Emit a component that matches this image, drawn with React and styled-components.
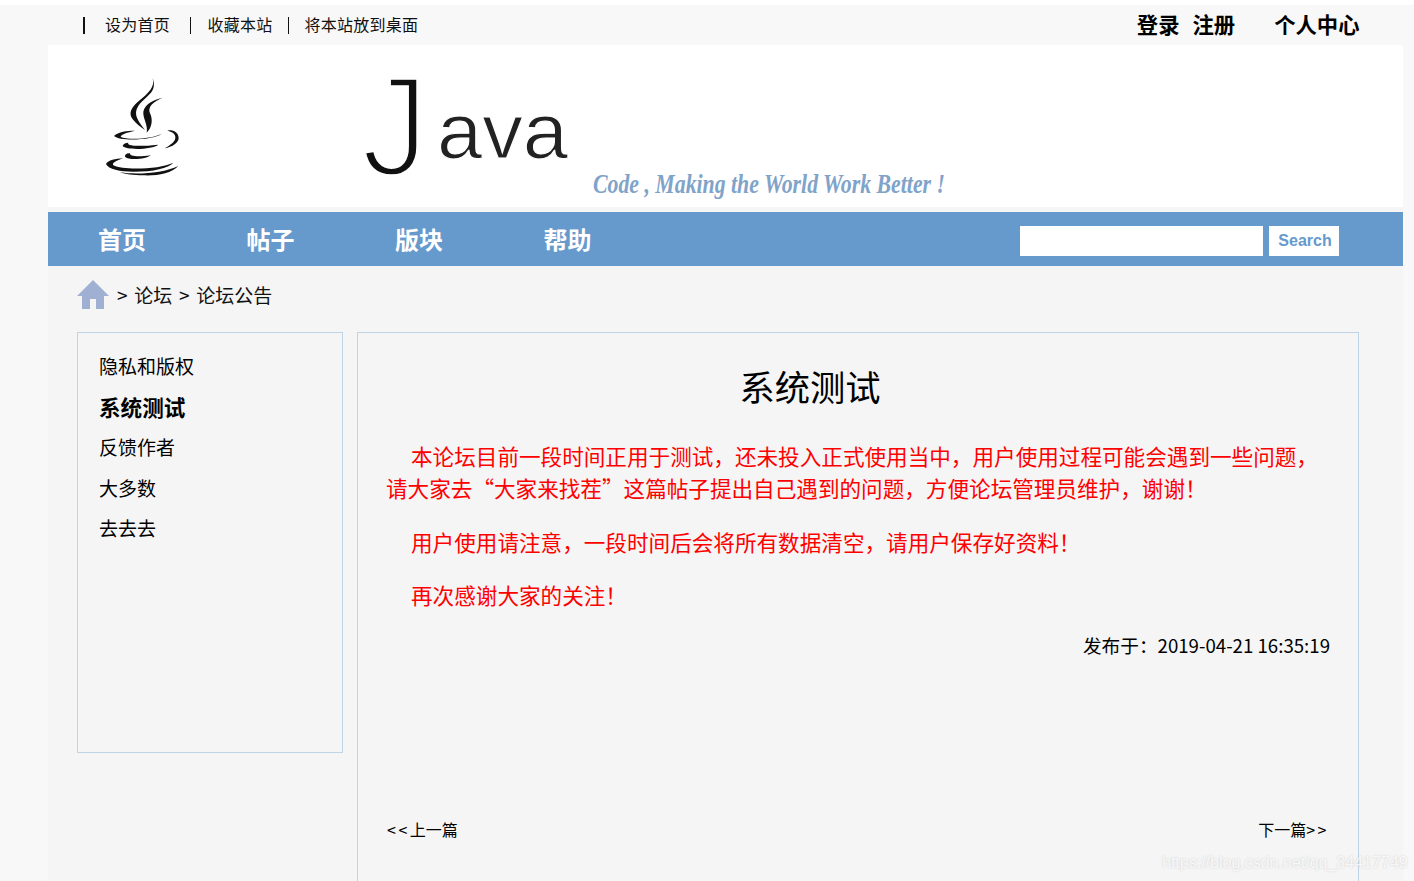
import React from "react";
import styled, { createGlobalStyle } from "styled-components";

const Global = createGlobalStyle`
  html, body { margin: 0; padding: 0; height: 881px; overflow: hidden; background: #fff; }
  body { font-family: "Noto Sans CJK SC", "Liberation Sans", sans-serif; color: #000; }
  * { box-sizing: border-box; }
`;

const Page = styled.div`
  position: relative;
  height: 881px;
  margin-top: 5px;
  padding-left: 48px;
  padding-right: 11px;
  background: #f8f8f8;
  overflow: hidden;
`;
const Wrapper = styled.div`
  width: 1355px;
  min-height: 876px;
  background: #f5f5f5;
`;
const TopBar = styled.div`
  height: 40px;
  display: flex;
  align-items: center;
  justify-content: space-between;
  background: #f8f8f8;
  margin-left: -48px;
  padding: 0 43.5px 0 83px;
  width: 1403px;
`;
const TopLinks = styled.div`
  display: flex;
  align-items: center;
  font-size: 16px;
  line-height: 38px;
  height: 40px;
  padding-bottom: 2px;
`;
const Sep = styled.span`
  display: inline-block;
  width: 1.5px;
  height: 17px;
  margin-top: 2px;
  background: #111;
  margin-left: ${(p) => p.$ml}px;
  margin-right: ${(p) => p.$mr}px;
`;
const TopLink = styled.a`
  color: #111;
  text-decoration: none;
  letter-spacing: 0.25px;
`;
const UserLinks = styled.div`
  display: flex;
  font-size: 21.33px;
  font-weight: 700;
  line-height: 38px;
  height: 40px;
  padding-bottom: 2px;
`;
const UserLink = styled.a`
  color: #000;
  margin-left: ${(p) => p.$ml || 0}px;
`;
const Banner = styled.div`
  height: 162px;
  background: #fff;
`;
const Logo = styled.svg`
  display: block;
`;
const Nav = styled.nav`
  height: 54px;
  margin-top: 5px;
  background: #6699cc;
  display: flex;
  align-items: center;
  padding: 0 64px 0 50px;
`;
const NavItem = styled.a`
  width: 148.5px;
  color: #fff;
  font-size: 24px;
  font-weight: 700;
  line-height: 54px;
`;
const SearchForm = styled.form`
  margin: 4px 0 0 auto;
  display: flex;
  gap: 6px;
`;
const SearchInput = styled.input`
  width: 243px;
  height: 30px;
  border: 0;
  padding: 0;
  background: #fff;
`;
const SearchButton = styled.button`
  width: 70px;
  height: 30px;
  border: 0;
  padding: 0 0 0 2px;
  background: #fff;
  color: #6699cc;
  font: 700 16px "Liberation Sans", sans-serif;
`;
const Crumbs = styled.div`
  height: 66px;
  display: flex;
  align-items: center;
  padding: 0 0 10px 29px;
  font-size: 19px;
  word-spacing: 2.5px;
  color: #111;
  gap: 8px;
`;
const HomeSvg = styled.svg`
  margin-top: 2px;
  flex: none;
`;
const Content = styled.div`
  display: flex;
  align-items: flex-start;
  gap: 14px;
  padding-left: 29px;
`;
const Sidebar = styled.aside`
  width: 266px;
  height: 421px;
  border: 1px solid #c0d4e6;
  padding: 13px 0 0 21px;
`;
const SideItem = styled.div`
  font-size: ${(p) => (p.$active ? 21.6 : 19)}px;
  line-height: 40.5px;
  font-weight: ${(p) => (p.$active ? 700 : 400)};
`;
const Article = styled.main`
  width: 1002px;
  height: 600px;
  border: 1px solid #c0d4e6;
  padding: 0 28px;
`;
const Title = styled.h1`
  margin: 25px 0 0;
  height: 56px;
  font-size: 35.3px;
  font-weight: 400;
  line-height: 56px;
  text-align: center;
  padding-right: 96px;
`;
const Para = styled.p`
  margin: ${(p) => p.$mt}px 0 0;
  color: #ff0000;
  font-size: 21.6px;
  line-height: 32px;
  text-indent: 25px;
`;
const Posted = styled.div`
  margin-top: 18px;
  font-size: 18.67px;
  line-height: 32px;
  text-align: right;
`;
const Pager = styled.div`
  margin-top: 152px;
  padding: 0 1px;
  display: flex;
  justify-content: space-between;
  font-size: 16px;
  line-height: 32px;
`;
const Arrows = styled.span`
  letter-spacing: 2.5px;
`;
const Watermark = styled.div`
  position: absolute;
  left: 1162px;
  top: 847px;
  font: 16px/22px "Liberation Sans", sans-serif;
  color: rgba(255, 255, 255, 0.8);
  text-shadow: 0 0 2px rgba(170, 170, 170, 0.55);
  white-space: nowrap;
`;

const BannerLogo = () => (
  <Logo width="1355" height="162" viewBox="48 45 1355 162">
    <g transform="translate(90 60) scale(0.3333)" fill="#111">
      <path d="M188 55C196 80 175 100 150 120C125 140 112 160 130 180C140 192 150 200 165 210C150 190 132 170 140 148C150 122 178 110 188 90C194 78 192 65 188 55Z" />
      <path d="M218 113C195 118 165 130 160 155C158 175 175 195 170 218C185 205 190 180 180 160C172 140 190 125 218 113Z" />
      <path d="M72 228C85 215 110 212 135 212C110 218 95 222 92 230C110 240 180 238 215 222C190 240 90 245 72 228Z" />
      <path d="M232 212C255 205 270 225 265 240C258 255 240 262 224 265C240 255 258 245 256 230C254 218 242 214 232 212Z" />
      <path d="M98 258C100 250 108 248 115 248C110 255 130 262 205 254C190 268 110 272 98 258Z" />
      <path d="M105 290C105 282 112 280 120 280C118 288 140 292 182 286C170 298 115 302 105 290Z" />
      <path d="M48 312C55 300 75 296 100 295C80 302 65 308 70 316C100 332 210 328 250 308C235 325 190 335 130 335C90 335 55 328 48 312Z" />
      <path d="M90 337C140 345 220 340 265 318C245 340 200 348 160 346C130 346 105 343 90 337Z" />
    </g>
    <text x="361" y="176" fontFamily="Liberation Sans" fontSize="142" textLength="68" lengthAdjust="spacingAndGlyphs" fill="#111" stroke="#fff" strokeWidth="5.5" paintOrder="fill stroke">J</text>
    <text x="437" y="158" fontFamily="Liberation Sans" fontSize="78" textLength="131" lengthAdjust="spacingAndGlyphs" fill="#222" stroke="#fff" strokeWidth="1.2" paintOrder="fill stroke">ava</text>
    <text x="593" y="193" fontFamily="Liberation Serif" fontStyle="italic" fontWeight="700" fontSize="28" textLength="352" lengthAdjust="spacingAndGlyphs" fill="#7fa3c9">Code , Making the World Work Better !</text>
  </Logo>
);

const HomeIcon = () => (
  <HomeSvg width="32" height="30" viewBox="0 0 32 30">
    <path d="M16 0 32 16H27V29H19V19H13V29H5V16H0Z" fill="#a0b0d2" />
  </HomeSvg>
);

export default function App() {
  return (
    <>
      <Global />
      <Page>
        <Wrapper>
          <TopBar>
            <TopLinks>
              <Sep $ml={0} $mr={20.5} />
              <TopLink>设为首页</TopLink>
              <Sep $ml={19.5} $mr={16.5} />
              <TopLink>收藏本站</TopLink>
              <Sep $ml={15} $mr={15.5} />
              <TopLink>将本站放到桌面</TopLink>
            </TopLinks>
            <UserLinks>
              <UserLink>登录</UserLink>
              <UserLink $ml={13}>注册</UserLink>
              <UserLink $ml={39}>个人中心</UserLink>
            </UserLinks>
          </TopBar>
          <Banner>
            <BannerLogo />
          </Banner>
          <Nav>
            <NavItem>首页</NavItem>
            <NavItem>帖子</NavItem>
            <NavItem>版块</NavItem>
            <NavItem>帮助</NavItem>
            <SearchForm>
              <SearchInput />
              <SearchButton type="button">Search</SearchButton>
            </SearchForm>
          </Nav>
          <Crumbs>
            <HomeIcon />
            <span>&gt; 论坛 &gt; 论坛公告</span>
          </Crumbs>
          <Content>
            <Sidebar>
              <SideItem>隐私和版权</SideItem>
              <SideItem $active>系统测试</SideItem>
              <SideItem>反馈作者</SideItem>
              <SideItem>大多数</SideItem>
              <SideItem>去去去</SideItem>
            </Sidebar>
            <Article>
              <Title>系统测试</Title>
              <Para $mt={26}>本论坛目前一段时间正用于测试，还未投入正式使用当中，用户使用过程可能会遇到一些问题，请大家去“大家来找茬”这篇帖子提出自己遇到的问题，方便论坛管理员维护，谢谢！</Para>
              <Para $mt={22}>用户使用请注意，一段时间后会将所有数据清空，请用户保存好资料！</Para>
              <Para $mt={21}>再次感谢大家的关注！</Para>
              <Posted>发布于：2019-04-21 16:35:19</Posted>
              <Pager>
                <span><Arrows>&lt;&lt;</Arrows>上一篇</span>
                <span>下一篇<Arrows>&gt;&gt;</Arrows></span>
              </Pager>
            </Article>
          </Content>
        </Wrapper>
        <Watermark>https://blog.csdn.net/qq_34417749</Watermark>
      </Page>
    </>
  );
}
